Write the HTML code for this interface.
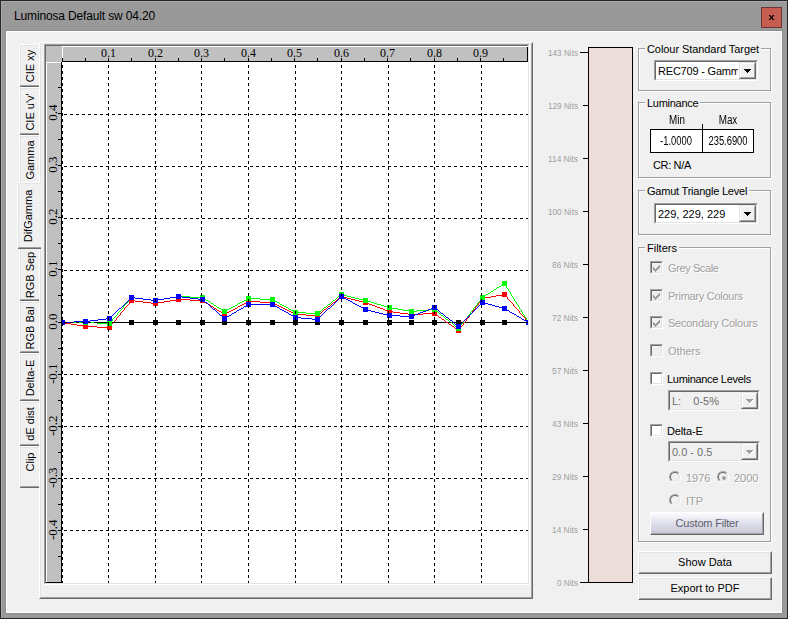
<!DOCTYPE html>
<html lang="en">
<head>
<meta charset="utf-8">
<title>Luminosa Default sw 04.20</title>
<style>
html,body{margin:0;padding:0;}
body{width:788px;height:619px;overflow:hidden;background:#999999;position:relative;font-family:"Liberation Sans",sans-serif;font-size:11px;color:#000;}
.abs,#win *{position:absolute;box-sizing:border-box;}
#win{position:absolute;left:0;top:0;width:788px;height:619px;background:#999999;border:1px solid #26282d;box-sizing:border-box;overflow:hidden;}
#hl{left:0;top:0;width:786px;height:617px;border-left:1px solid #a8a8a8;border-top:1px solid #a8a8a8;}
#title{left:13px;top:7px;letter-spacing:-0.15px;font-size:12px;line-height:16px;white-space:nowrap;color:#000;}
#close{left:760px;top:6px;width:21px;height:21px;background:#c75c50;border:1px solid #6a3832;}
#close span{left:0;top:0;width:19px;height:19px;line-height:18px;text-align:center;font-size:9.5px;font-weight:bold;color:#000;transform:scaleX(1.15);}
#ring{left:4px;top:29px;width:778px;height:584px;background:#8e8e8e;}
#client{left:5px;top:30px;width:776px;height:582px;background:#f0f0f0;border:1px solid #fff;}
#chart{position:absolute;left:-1px;top:-1px;}
.rl{font-family:"Liberation Serif",serif;font-size:12px;fill:#000;}
.nt{font-family:"Liberation Sans",sans-serif;font-size:9.5px;fill:#a0a0a0;}
/* tab pane */
#pane{left:38px;top:41px;width:494px;height:557px;border:1px solid;border-color:#fff #696969 #696969 #fff;}
#pane i{left:0;top:0;right:0;bottom:0;border:1px solid;border-color:#e3e3e3 #a0a0a0 #a0a0a0 #e3e3e3;}
.tab{left:18px;width:20px;background:#f0f0f0;border-left:1px solid #fff;border-top:1px solid #fff;border-bottom:1px solid #696969;border-radius:2px 0 0 2px;}
.tab i{left:0;top:0;right:0;bottom:0;border-left:1px solid #e3e3e3;border-top:1px solid #e3e3e3;border-bottom:1px solid #a0a0a0;border-radius:1px 0 0 1px;}
.tab span{left:9.5px;top:50%;white-space:nowrap;transform:translate(-50%,-50%) rotate(-90deg);font-size:11px;line-height:13px;margin-top:0.5px;}
.tab.sel{left:16px;width:24px;z-index:3;}
.tab.sel span{left:9.5px;}
/* group boxes */
.gb{border:1px solid #a0a0a0;box-shadow:1px 1px 0 #fff, inset 1px 1px 0 #fff;}
.gl{background:#f0f0f0;padding:0 2px;line-height:13px;white-space:nowrap;}
.sunk{background:#fff;border:1px solid;border-color:#a0a0a0 #fff #fff #a0a0a0;}
.sunk>b{left:0;top:0;right:0;bottom:0;border:1px solid;border-color:#696969 #e3e3e3 #e3e3e3 #696969;font-weight:normal;}
.sunk.dis{background:#f0f0f0;}
.ctext{left:3px;top:3px;line-height:13px;white-space:nowrap;overflow:hidden;}
.dd{width:17px;height:17px;right:1px;top:1px;background:#f0f0f0;border:1px solid;border-color:#e3e3e3 #696969 #696969 #e3e3e3;}
.dd>u{left:0;top:0;right:0;bottom:0;border:1px solid;border-color:#fff #a0a0a0 #a0a0a0 #fff;}
.dd>.tri{left:4px;top:6px;fill:#000;}
.dis .dd>.tri{fill:#a0a0a0;filter:drop-shadow(1px 1px 0 #fff);overflow:visible;}
.cb{width:13px;height:13px;}
.lab{line-height:13px;white-space:nowrap;}
.dlab{color:#a0a0a0;text-shadow:1px 1px 0 #fff;}
.rad{width:12px;height:12px;border-radius:50%;background:#f0f0f0;border:1px solid;border-color:#a0a0a0 #fff #fff #a0a0a0;}
.rad>b{left:0;top:0;right:0;bottom:0;border-radius:50%;border:1px solid;border-color:#696969 #e3e3e3 #e3e3e3 #696969;}
.rad>u{left:4px;top:4px;width:4px;height:4px;border-radius:50%;background:#a0a0a0;}
.btn{background:#f0f0f0;border:1px solid;border-color:#fff #696969 #696969 #fff;text-align:center;}
.btn>b{left:0;top:0;right:0;bottom:0;border:1px solid;border-color:#e3e3e3 #a0a0a0 #a0a0a0 #e3e3e3;font-weight:normal;}
.btn>span{left:0;right:0;top:4px;line-height:13px;text-align:center;}
.nar{font-size:12px;line-height:14px;white-space:nowrap;transform-origin:50% 50%;}
</style>
</head>
<body>
<div id="win">
  <div id="hl"></div>
  <div id="title">Luminosa Default sw 04.20</div>
  <div id="close"><span>x</span></div>
  <div id="ring"></div>
  <div id="client"></div>

  <!-- tab control -->
  <div class="tab" style="top:43px;height:43px;"><i></i><span>CIE xy</span></div>
  <div class="tab" style="top:86px;height:48px;"><i></i><span>CIE u'v'</span></div>
  <div class="tab" style="top:134px;height:49px;"><i></i><span>Gamma</span></div>
  <div class="tab" style="top:246px;height:54px;"><i></i><span>RGB Sep</span></div>
  <div class="tab" style="top:300px;height:52px;"><i></i><span>RGB Bal</span></div>
  <div class="tab" style="top:352px;height:48px;"><i></i><span>Delta-E</span></div>
  <div class="tab" style="top:400px;height:45px;"><i></i><span>dE dist</span></div>
  <div class="tab" style="top:445px;height:42px;"><i></i><span style="margin-top:-5px;">Clip</span></div>
  <div id="pane"><i></i></div>
  <div class="tab sel" style="top:181px;height:67px;"><i></i><span>DifGamma</span></div>

  <svg id="chart" width="788" height="619" viewBox="0 0 788 619" shape-rendering="crispEdges">
<rect x="44" y="44" width="486" height="541" fill="#ffffff"/>
<rect x="45" y="45" width="484" height="539" fill="#e3e3e3"/>
<rect x="44" y="44" width="485" height="1" fill="#a0a0a0"/>
<rect x="44" y="44" width="1" height="540" fill="#a0a0a0"/>
<rect x="45" y="45" width="483" height="1" fill="#696969"/>
<rect x="45" y="45" width="1" height="538" fill="#696969"/>
<rect x="46" y="46" width="482" height="537" fill="#ffffff"/>
<rect x="46" y="46" width="16" height="16" fill="#c0c0c0"/>
<rect x="62" y="46" width="466" height="16" fill="#ffffff"/>
<rect x="63" y="47" width="465" height="15" fill="#c0c0c0"/>
<rect x="46" y="62" width="16" height="521" fill="#ffffff"/>
<rect x="47" y="63" width="15" height="520" fill="#c0c0c0"/>
<rect x="62" y="61" width="466" height="1" fill="#000000"/>
<rect x="61" y="62" width="1" height="521" fill="#000000"/>
<rect x="527" y="47" width="1" height="15" fill="#000000"/>
<rect x="46" y="582" width="16" height="1" fill="#000000"/>
<rect x="62" y="58" width="1" height="3" fill="#000"/>
<rect x="85" y="58" width="1" height="3" fill="#000"/>
<rect x="108" y="58" width="1" height="3" fill="#000"/>
<rect x="131" y="58" width="1" height="3" fill="#000"/>
<rect x="155" y="58" width="1" height="3" fill="#000"/>
<rect x="178" y="58" width="1" height="3" fill="#000"/>
<rect x="201" y="58" width="1" height="3" fill="#000"/>
<rect x="224" y="58" width="1" height="3" fill="#000"/>
<rect x="248" y="58" width="1" height="3" fill="#000"/>
<rect x="271" y="58" width="1" height="3" fill="#000"/>
<rect x="294" y="58" width="1" height="3" fill="#000"/>
<rect x="317" y="58" width="1" height="3" fill="#000"/>
<rect x="341" y="58" width="1" height="3" fill="#000"/>
<rect x="364" y="58" width="1" height="3" fill="#000"/>
<rect x="387" y="58" width="1" height="3" fill="#000"/>
<rect x="410" y="58" width="1" height="3" fill="#000"/>
<rect x="434" y="58" width="1" height="3" fill="#000"/>
<rect x="457" y="58" width="1" height="3" fill="#000"/>
<rect x="480" y="58" width="1" height="3" fill="#000"/>
<rect x="503" y="58" width="1" height="3" fill="#000"/>
<rect x="527" y="58" width="1" height="3" fill="#000"/>
<rect x="58" y="87" width="3" height="1" fill="#000"/>
<rect x="58" y="113" width="3" height="1" fill="#000"/>
<rect x="58" y="139" width="3" height="1" fill="#000"/>
<rect x="58" y="165" width="3" height="1" fill="#000"/>
<rect x="58" y="191" width="3" height="1" fill="#000"/>
<rect x="58" y="217" width="3" height="1" fill="#000"/>
<rect x="58" y="243" width="3" height="1" fill="#000"/>
<rect x="58" y="269" width="3" height="1" fill="#000"/>
<rect x="58" y="295" width="3" height="1" fill="#000"/>
<rect x="58" y="322" width="3" height="1" fill="#000"/>
<rect x="58" y="348" width="3" height="1" fill="#000"/>
<rect x="58" y="374" width="3" height="1" fill="#000"/>
<rect x="58" y="400" width="3" height="1" fill="#000"/>
<rect x="58" y="426" width="3" height="1" fill="#000"/>
<rect x="58" y="452" width="3" height="1" fill="#000"/>
<rect x="58" y="478" width="3" height="1" fill="#000"/>
<rect x="58" y="504" width="3" height="1" fill="#000"/>
<rect x="58" y="530" width="3" height="1" fill="#000"/>
<rect x="58" y="556" width="3" height="1" fill="#000"/>
<rect x="58" y="582" width="3" height="1" fill="#000"/>
<text x="108.5" y="57" text-anchor="middle" class="rl">0.1</text>
<text x="155.5" y="57" text-anchor="middle" class="rl">0.2</text>
<text x="201.5" y="57" text-anchor="middle" class="rl">0.3</text>
<text x="248.5" y="57" text-anchor="middle" class="rl">0.4</text>
<text x="294.5" y="57" text-anchor="middle" class="rl">0.5</text>
<text x="341.5" y="57" text-anchor="middle" class="rl">0.6</text>
<text x="387.5" y="57" text-anchor="middle" class="rl">0.7</text>
<text x="434.5" y="57" text-anchor="middle" class="rl">0.8</text>
<text x="480.5" y="57" text-anchor="middle" class="rl">0.9</text>
<text transform="translate(57.1,112.7) rotate(-90)" text-anchor="middle" class="rl" style="font-size:13px">0.4</text>
<text transform="translate(57.1,164.7) rotate(-90)" text-anchor="middle" class="rl" style="font-size:13px">0.3</text>
<text transform="translate(57.1,216.7) rotate(-90)" text-anchor="middle" class="rl" style="font-size:13px">0.2</text>
<text transform="translate(57.1,268.7) rotate(-90)" text-anchor="middle" class="rl" style="font-size:13px">0.1</text>
<text transform="translate(57.1,321.7) rotate(-90)" text-anchor="middle" class="rl" style="font-size:13px">0.0</text>
<text transform="translate(57.1,373.7) rotate(-90)" text-anchor="middle" class="rl" style="font-size:13px">-0.1</text>
<text transform="translate(57.1,425.7) rotate(-90)" text-anchor="middle" class="rl" style="font-size:13px">-0.2</text>
<text transform="translate(57.1,477.7) rotate(-90)" text-anchor="middle" class="rl" style="font-size:13px">-0.3</text>
<text transform="translate(57.1,529.7) rotate(-90)" text-anchor="middle" class="rl" style="font-size:13px">-0.4</text>
<g clip-path="url(#pc)">
<path fill="#000000" d="M62 322h467v1h-467z"/>
<rect x="60" y="320" width="5" height="5" fill="#000000"/>
<rect x="83" y="320" width="5" height="5" fill="#000000"/>
<rect x="107" y="320" width="5" height="5" fill="#000000"/>
<rect x="129" y="320" width="5" height="5" fill="#000000"/>
<rect x="153" y="320" width="5" height="5" fill="#000000"/>
<rect x="176" y="320" width="5" height="5" fill="#000000"/>
<rect x="200" y="320" width="5" height="5" fill="#000000"/>
<rect x="222" y="320" width="5" height="5" fill="#000000"/>
<rect x="246" y="320" width="5" height="5" fill="#000000"/>
<rect x="270" y="320" width="5" height="5" fill="#000000"/>
<rect x="293" y="320" width="5" height="5" fill="#000000"/>
<rect x="315" y="320" width="5" height="5" fill="#000000"/>
<rect x="339" y="320" width="5" height="5" fill="#000000"/>
<rect x="363" y="320" width="5" height="5" fill="#000000"/>
<rect x="387" y="320" width="5" height="5" fill="#000000"/>
<rect x="409" y="320" width="5" height="5" fill="#000000"/>
<rect x="432" y="320" width="5" height="5" fill="#000000"/>
<rect x="456" y="320" width="5" height="5" fill="#000000"/>
<rect x="480" y="320" width="5" height="5" fill="#000000"/>
<rect x="502" y="320" width="5" height="5" fill="#000000"/>
<rect x="526" y="320" width="5" height="5" fill="#000000"/>
<path fill="#ff0000" d="M502 294h3v1h-3zM496 295h6v1h-6zM505 295h1v1h-1zM341 296h2v1h-2zM491 296h5v1h-5zM506 296h1v1h-1zM340 297h1v1h-1zM343 297h4v1h-4zM485 297h6v1h-6zM507 297h1v1h-1zM338 298h2v1h-2zM347 298h4v1h-4zM482 298h3v1h-3zM507 298h1v1h-1zM176 299h14v1h-14zM337 299h1v1h-1zM351 299h4v1h-4zM481 299h1v1h-1zM508 299h1v1h-1zM131 300h4v1h-4zM170 300h6v1h-6zM190 300h13v1h-13zM336 300h1v1h-1zM355 300h4v1h-4zM481 300h1v1h-1zM509 300h1v1h-1zM130 301h1v1h-1zM135 301h8v1h-8zM164 301h6v1h-6zM203 301h2v1h-2zM248 301h12v1h-12zM335 301h1v1h-1zM359 301h4v1h-4zM480 301h1v1h-1zM510 301h1v1h-1zM129 302h1v1h-1zM143 302h8v1h-8zM158 302h6v1h-6zM205 302h1v1h-1zM246 302h2v1h-2zM260 302h13v1h-13zM333 302h2v1h-2zM363 302h4v1h-4zM479 302h1v1h-1zM511 302h1v1h-1zM129 303h1v1h-1zM151 303h7v1h-7zM206 303h2v1h-2zM244 303h2v1h-2zM273 303h2v1h-2zM332 303h1v1h-1zM367 303h2v1h-2zM478 303h1v1h-1zM512 303h1v1h-1zM128 304h1v1h-1zM208 304h2v1h-2zM242 304h2v1h-2zM275 304h2v1h-2zM331 304h1v1h-1zM369 304h3v1h-3zM478 304h1v1h-1zM513 304h1v1h-1zM127 305h1v1h-1zM210 305h1v1h-1zM240 305h2v1h-2zM277 305h2v1h-2zM330 305h1v1h-1zM372 305h3v1h-3zM477 305h1v1h-1zM513 305h1v1h-1zM126 306h1v1h-1zM211 306h2v1h-2zM238 306h2v1h-2zM279 306h2v1h-2zM328 306h2v1h-2zM375 306h2v1h-2zM476 306h1v1h-1zM514 306h1v1h-1zM125 307h1v1h-1zM213 307h1v1h-1zM237 307h1v1h-1zM281 307h2v1h-2zM327 307h1v1h-1zM377 307h3v1h-3zM475 307h1v1h-1zM515 307h1v1h-1zM124 308h1v1h-1zM214 308h2v1h-2zM235 308h2v1h-2zM283 308h2v1h-2zM326 308h1v1h-1zM380 308h3v1h-3zM475 308h1v1h-1zM516 308h1v1h-1zM124 309h1v1h-1zM216 309h1v1h-1zM233 309h2v1h-2zM285 309h2v1h-2zM324 309h2v1h-2zM383 309h2v1h-2zM474 309h1v1h-1zM517 309h1v1h-1zM123 310h1v1h-1zM217 310h2v1h-2zM231 310h2v1h-2zM287 310h2v1h-2zM323 310h1v1h-1zM385 310h3v1h-3zM473 310h1v1h-1zM518 310h1v1h-1zM122 311h1v1h-1zM219 311h2v1h-2zM229 311h2v1h-2zM289 311h2v1h-2zM322 311h1v1h-1zM388 311h5v1h-5zM472 311h1v1h-1zM519 311h1v1h-1zM121 312h1v1h-1zM221 312h1v1h-1zM227 312h2v1h-2zM291 312h2v1h-2zM321 312h1v1h-1zM393 312h7v1h-7zM472 312h1v1h-1zM519 312h1v1h-1zM120 313h1v1h-1zM222 313h2v1h-2zM225 313h2v1h-2zM293 313h2v1h-2zM319 313h2v1h-2zM400 313h8v1h-8zM423 313h12v1h-12zM471 313h1v1h-1zM520 313h1v1h-1zM120 314h1v1h-1zM224 314h1v1h-1zM295 314h11v1h-11zM318 314h1v1h-1zM408 314h15v1h-15zM435 314h2v1h-2zM470 314h1v1h-1zM521 314h1v1h-1zM119 315h1v1h-1zM306 315h12v1h-12zM437 315h1v1h-1zM469 315h1v1h-1zM522 315h1v1h-1zM118 316h1v1h-1zM438 316h1v1h-1zM469 316h1v1h-1zM523 316h1v1h-1zM117 317h1v1h-1zM439 317h2v1h-2zM468 317h1v1h-1zM524 317h1v1h-1zM116 318h1v1h-1zM441 318h1v1h-1zM467 318h1v1h-1zM525 318h1v1h-1zM116 319h1v1h-1zM442 319h2v1h-2zM466 319h1v1h-1zM525 319h1v1h-1zM115 320h1v1h-1zM444 320h1v1h-1zM466 320h1v1h-1zM526 320h1v1h-1zM114 321h1v1h-1zM445 321h1v1h-1zM465 321h1v1h-1zM527 321h1v1h-1zM62 322h3v1h-3zM113 322h1v1h-1zM446 322h2v1h-2zM464 322h1v1h-1zM528 322h1v1h-1zM65 323h6v1h-6zM112 323h1v1h-1zM448 323h1v1h-1zM463 323h1v1h-1zM71 324h6v1h-6zM111 324h1v1h-1zM449 324h2v1h-2zM463 324h1v1h-1zM77 325h6v1h-6zM111 325h1v1h-1zM451 325h1v1h-1zM462 325h1v1h-1zM83 326h14v1h-14zM110 326h1v1h-1zM452 326h2v1h-2zM461 326h1v1h-1zM97 327h13v1h-13zM454 327h1v1h-1zM460 327h1v1h-1zM455 328h1v1h-1zM460 328h1v1h-1zM456 329h2v1h-2zM459 329h1v1h-1zM458 330h1v1h-1z"/>
<rect x="60" y="320" width="5" height="5" fill="#ff0000"/>
<rect x="83" y="324" width="5" height="5" fill="#ff0000"/>
<rect x="107" y="325" width="5" height="5" fill="#ff0000"/>
<rect x="129" y="298" width="5" height="5" fill="#ff0000"/>
<rect x="153" y="301" width="5" height="5" fill="#ff0000"/>
<rect x="176" y="297" width="5" height="5" fill="#ff0000"/>
<rect x="200" y="298" width="5" height="5" fill="#ff0000"/>
<rect x="222" y="312" width="5" height="5" fill="#ff0000"/>
<rect x="246" y="299" width="5" height="5" fill="#ff0000"/>
<rect x="270" y="300" width="5" height="5" fill="#ff0000"/>
<rect x="293" y="312" width="5" height="5" fill="#ff0000"/>
<rect x="315" y="313" width="5" height="5" fill="#ff0000"/>
<rect x="339" y="294" width="5" height="5" fill="#ff0000"/>
<rect x="363" y="300" width="5" height="5" fill="#ff0000"/>
<rect x="387" y="309" width="5" height="5" fill="#ff0000"/>
<rect x="409" y="312" width="5" height="5" fill="#ff0000"/>
<rect x="432" y="311" width="5" height="5" fill="#ff0000"/>
<rect x="456" y="328" width="5" height="5" fill="#ff0000"/>
<rect x="480" y="296" width="5" height="5" fill="#ff0000"/>
<rect x="502" y="292" width="5" height="5" fill="#ff0000"/>
<rect x="526" y="320" width="5" height="5" fill="#ff0000"/>
<path fill="#00ff00" d="M504 283h1v1h-1zM502 284h2v1h-2zM505 284h1v1h-1zM501 285h1v1h-1zM505 285h1v1h-1zM499 286h2v1h-2zM506 286h1v1h-1zM497 287h2v1h-2zM506 287h1v1h-1zM496 288h1v1h-1zM507 288h1v1h-1zM494 289h2v1h-2zM508 289h1v1h-1zM493 290h1v1h-1zM508 290h1v1h-1zM491 291h2v1h-2zM509 291h1v1h-1zM490 292h1v1h-1zM510 292h1v1h-1zM488 293h2v1h-2zM510 293h1v1h-1zM341 294h2v1h-2zM486 294h2v1h-2zM511 294h1v1h-1zM340 295h1v1h-1zM343 295h4v1h-4zM485 295h1v1h-1zM511 295h1v1h-1zM176 296h14v1h-14zM338 296h2v1h-2zM347 296h4v1h-4zM483 296h2v1h-2zM512 296h1v1h-1zM131 297h4v1h-4zM170 297h6v1h-6zM190 297h13v1h-13zM337 297h1v1h-1zM351 297h4v1h-4zM482 297h1v1h-1zM513 297h1v1h-1zM130 298h1v1h-1zM135 298h8v1h-8zM164 298h6v1h-6zM203 298h2v1h-2zM248 298h12v1h-12zM336 298h1v1h-1zM355 298h4v1h-4zM481 298h1v1h-1zM513 298h1v1h-1zM129 299h1v1h-1zM143 299h8v1h-8zM158 299h6v1h-6zM205 299h1v1h-1zM246 299h2v1h-2zM260 299h13v1h-13zM335 299h1v1h-1zM359 299h4v1h-4zM480 299h1v1h-1zM514 299h1v1h-1zM128 300h1v1h-1zM151 300h7v1h-7zM206 300h2v1h-2zM244 300h2v1h-2zM273 300h2v1h-2zM333 300h2v1h-2zM363 300h4v1h-4zM480 300h1v1h-1zM514 300h1v1h-1zM128 301h1v1h-1zM208 301h2v1h-2zM242 301h2v1h-2zM275 301h2v1h-2zM332 301h1v1h-1zM367 301h4v1h-4zM479 301h1v1h-1zM515 301h1v1h-1zM127 302h1v1h-1zM210 302h1v1h-1zM240 302h2v1h-2zM277 302h2v1h-2zM331 302h1v1h-1zM371 302h3v1h-3zM478 302h1v1h-1zM516 302h1v1h-1zM126 303h1v1h-1zM211 303h2v1h-2zM238 303h2v1h-2zM279 303h1v1h-1zM330 303h1v1h-1zM374 303h3v1h-3zM477 303h1v1h-1zM516 303h1v1h-1zM125 304h1v1h-1zM213 304h1v1h-1zM237 304h1v1h-1zM280 304h2v1h-2zM328 304h2v1h-2zM377 304h4v1h-4zM477 304h1v1h-1zM517 304h1v1h-1zM124 305h1v1h-1zM214 305h2v1h-2zM235 305h2v1h-2zM282 305h2v1h-2zM327 305h1v1h-1zM381 305h3v1h-3zM476 305h1v1h-1zM518 305h1v1h-1zM123 306h1v1h-1zM216 306h1v1h-1zM233 306h2v1h-2zM284 306h2v1h-2zM326 306h1v1h-1zM384 306h4v1h-4zM475 306h1v1h-1zM518 306h1v1h-1zM123 307h1v1h-1zM217 307h2v1h-2zM231 307h2v1h-2zM286 307h2v1h-2zM324 307h2v1h-2zM388 307h4v1h-4zM474 307h1v1h-1zM519 307h1v1h-1zM122 308h1v1h-1zM219 308h2v1h-2zM229 308h2v1h-2zM288 308h1v1h-1zM323 308h1v1h-1zM392 308h6v1h-6zM473 308h1v1h-1zM519 308h1v1h-1zM121 309h1v1h-1zM221 309h1v1h-1zM227 309h2v1h-2zM289 309h2v1h-2zM322 309h1v1h-1zM398 309h5v1h-5zM429 309h6v1h-6zM473 309h1v1h-1zM520 309h1v1h-1zM120 310h1v1h-1zM222 310h2v1h-2zM225 310h2v1h-2zM291 310h2v1h-2zM321 310h1v1h-1zM403 310h6v1h-6zM417 310h12v1h-12zM435 310h1v1h-1zM472 310h1v1h-1zM521 310h1v1h-1zM119 311h1v1h-1zM224 311h1v1h-1zM293 311h2v1h-2zM319 311h2v1h-2zM409 311h8v1h-8zM436 311h2v1h-2zM471 311h1v1h-1zM521 311h1v1h-1zM118 312h1v1h-1zM295 312h11v1h-11zM318 312h1v1h-1zM438 312h1v1h-1zM470 312h1v1h-1zM522 312h1v1h-1zM117 313h1v1h-1zM306 313h12v1h-12zM439 313h1v1h-1zM470 313h1v1h-1zM522 313h1v1h-1zM117 314h1v1h-1zM440 314h1v1h-1zM469 314h1v1h-1zM523 314h1v1h-1zM116 315h1v1h-1zM441 315h2v1h-2zM468 315h1v1h-1zM524 315h1v1h-1zM115 316h1v1h-1zM443 316h1v1h-1zM467 316h1v1h-1zM524 316h1v1h-1zM114 317h1v1h-1zM444 317h1v1h-1zM467 317h1v1h-1zM525 317h1v1h-1zM113 318h1v1h-1zM445 318h1v1h-1zM466 318h1v1h-1zM526 318h1v1h-1zM112 319h1v1h-1zM446 319h2v1h-2zM465 319h1v1h-1zM526 319h1v1h-1zM112 320h1v1h-1zM448 320h1v1h-1zM464 320h1v1h-1zM527 320h1v1h-1zM111 321h1v1h-1zM449 321h1v1h-1zM463 321h1v1h-1zM527 321h1v1h-1zM62 322h35v1h-35zM110 322h1v1h-1zM450 322h2v1h-2zM463 322h1v1h-1zM528 322h1v1h-1zM97 323h13v1h-13zM452 323h1v1h-1zM462 323h1v1h-1zM453 324h1v1h-1zM461 324h1v1h-1zM454 325h1v1h-1zM460 325h1v1h-1zM455 326h2v1h-2zM460 326h1v1h-1zM457 327h1v1h-1zM459 327h1v1h-1zM458 328h1v1h-1z"/>
<rect x="60" y="320" width="5" height="5" fill="#00ff00"/>
<rect x="83" y="320" width="5" height="5" fill="#00ff00"/>
<rect x="107" y="321" width="5" height="5" fill="#00ff00"/>
<rect x="129" y="295" width="5" height="5" fill="#00ff00"/>
<rect x="153" y="298" width="5" height="5" fill="#00ff00"/>
<rect x="176" y="294" width="5" height="5" fill="#00ff00"/>
<rect x="200" y="295" width="5" height="5" fill="#00ff00"/>
<rect x="222" y="309" width="5" height="5" fill="#00ff00"/>
<rect x="246" y="296" width="5" height="5" fill="#00ff00"/>
<rect x="270" y="297" width="5" height="5" fill="#00ff00"/>
<rect x="293" y="310" width="5" height="5" fill="#00ff00"/>
<rect x="315" y="311" width="5" height="5" fill="#00ff00"/>
<rect x="339" y="292" width="5" height="5" fill="#00ff00"/>
<rect x="363" y="298" width="5" height="5" fill="#00ff00"/>
<rect x="387" y="305" width="5" height="5" fill="#00ff00"/>
<rect x="409" y="309" width="5" height="5" fill="#00ff00"/>
<rect x="432" y="307" width="5" height="5" fill="#00ff00"/>
<rect x="456" y="326" width="5" height="5" fill="#00ff00"/>
<rect x="480" y="295" width="5" height="5" fill="#00ff00"/>
<rect x="502" y="281" width="5" height="5" fill="#00ff00"/>
<rect x="526" y="320" width="5" height="5" fill="#00ff00"/>
<path fill="#0000ff" d="M176 296h6v1h-6zM341 296h1v1h-1zM131 297h4v1h-4zM170 297h6v1h-6zM182 297h8v1h-8zM340 297h1v1h-1zM342 297h2v1h-2zM130 298h1v1h-1zM135 298h8v1h-8zM164 298h6v1h-6zM190 298h8v1h-8zM339 298h1v1h-1zM344 298h2v1h-2zM129 299h1v1h-1zM143 299h8v1h-8zM158 299h6v1h-6zM198 299h5v1h-5zM338 299h1v1h-1zM346 299h2v1h-2zM128 300h1v1h-1zM151 300h7v1h-7zM203 300h1v1h-1zM337 300h1v1h-1zM348 300h2v1h-2zM127 301h1v1h-1zM204 301h1v1h-1zM336 301h1v1h-1zM350 301h2v1h-2zM126 302h1v1h-1zM205 302h2v1h-2zM335 302h1v1h-1zM352 302h1v1h-1zM482 302h2v1h-2zM125 303h1v1h-1zM207 303h1v1h-1zM334 303h1v1h-1zM353 303h2v1h-2zM481 303h1v1h-1zM484 303h4v1h-4zM124 304h1v1h-1zM208 304h1v1h-1zM248 304h25v1h-25zM333 304h1v1h-1zM355 304h2v1h-2zM480 304h1v1h-1zM488 304h4v1h-4zM123 305h1v1h-1zM209 305h1v1h-1zM246 305h2v1h-2zM273 305h2v1h-2zM332 305h1v1h-1zM357 305h2v1h-2zM479 305h1v1h-1zM492 305h3v1h-3zM122 306h1v1h-1zM210 306h1v1h-1zM244 306h2v1h-2zM275 306h2v1h-2zM331 306h1v1h-1zM359 306h2v1h-2zM478 306h1v1h-1zM495 306h4v1h-4zM121 307h1v1h-1zM211 307h1v1h-1zM243 307h1v1h-1zM277 307h2v1h-2zM330 307h1v1h-1zM361 307h2v1h-2zM433 307h2v1h-2zM477 307h1v1h-1zM499 307h4v1h-4zM119 308h2v1h-2zM212 308h1v1h-1zM241 308h2v1h-2zM279 308h1v1h-1zM328 308h2v1h-2zM363 308h2v1h-2zM431 308h2v1h-2zM435 308h1v1h-1zM476 308h1v1h-1zM503 308h2v1h-2zM118 309h1v1h-1zM213 309h2v1h-2zM239 309h2v1h-2zM280 309h2v1h-2zM327 309h1v1h-1zM365 309h2v1h-2zM428 309h3v1h-3zM436 309h2v1h-2zM475 309h1v1h-1zM505 309h2v1h-2zM117 310h1v1h-1zM215 310h1v1h-1zM237 310h2v1h-2zM282 310h2v1h-2zM326 310h1v1h-1zM367 310h4v1h-4zM426 310h2v1h-2zM438 310h1v1h-1zM474 310h1v1h-1zM507 310h2v1h-2zM116 311h1v1h-1zM216 311h1v1h-1zM236 311h1v1h-1zM284 311h2v1h-2zM325 311h1v1h-1zM371 311h4v1h-4zM423 311h3v1h-3zM439 311h1v1h-1zM473 311h1v1h-1zM509 311h1v1h-1zM115 312h1v1h-1zM217 312h1v1h-1zM234 312h2v1h-2zM286 312h2v1h-2zM324 312h1v1h-1zM375 312h4v1h-4zM420 312h3v1h-3zM440 312h1v1h-1zM472 312h1v1h-1zM510 312h2v1h-2zM114 313h1v1h-1zM218 313h1v1h-1zM232 313h2v1h-2zM288 313h1v1h-1zM323 313h1v1h-1zM379 313h4v1h-4zM418 313h2v1h-2zM441 313h2v1h-2zM471 313h1v1h-1zM512 313h2v1h-2zM113 314h1v1h-1zM219 314h1v1h-1zM231 314h1v1h-1zM289 314h2v1h-2zM322 314h1v1h-1zM383 314h4v1h-4zM415 314h3v1h-3zM443 314h1v1h-1zM470 314h1v1h-1zM514 314h2v1h-2zM112 315h1v1h-1zM220 315h2v1h-2zM229 315h2v1h-2zM291 315h2v1h-2zM321 315h1v1h-1zM387 315h13v1h-13zM413 315h2v1h-2zM444 315h1v1h-1zM469 315h1v1h-1zM516 315h1v1h-1zM111 316h1v1h-1zM222 316h1v1h-1zM227 316h2v1h-2zM293 316h2v1h-2zM320 316h1v1h-1zM400 316h13v1h-13zM445 316h1v1h-1zM468 316h1v1h-1zM517 316h2v1h-2zM110 317h1v1h-1zM223 317h1v1h-1zM225 317h2v1h-2zM295 317h6v1h-6zM319 317h1v1h-1zM446 317h2v1h-2zM467 317h1v1h-1zM519 317h2v1h-2zM106 318h4v1h-4zM224 318h1v1h-1zM301 318h11v1h-11zM318 318h1v1h-1zM448 318h1v1h-1zM466 318h1v1h-1zM521 318h1v1h-1zM98 319h8v1h-8zM312 319h6v1h-6zM449 319h1v1h-1zM465 319h1v1h-1zM522 319h2v1h-2zM90 320h8v1h-8zM450 320h2v1h-2zM464 320h1v1h-1zM524 320h2v1h-2zM74 321h16v1h-16zM452 321h1v1h-1zM463 321h1v1h-1zM526 321h2v1h-2zM62 322h12v1h-12zM453 322h1v1h-1zM462 322h1v1h-1zM528 322h1v1h-1zM454 323h1v1h-1zM461 323h1v1h-1zM455 324h2v1h-2zM460 324h1v1h-1zM457 325h1v1h-1zM459 325h1v1h-1zM458 326h1v1h-1z"/>
<rect x="60" y="320" width="5" height="5" fill="#0000ff"/>
<rect x="83" y="319" width="5" height="5" fill="#0000ff"/>
<rect x="107" y="316" width="5" height="5" fill="#0000ff"/>
<rect x="129" y="295" width="5" height="5" fill="#0000ff"/>
<rect x="153" y="298" width="5" height="5" fill="#0000ff"/>
<rect x="176" y="294" width="5" height="5" fill="#0000ff"/>
<rect x="200" y="297" width="5" height="5" fill="#0000ff"/>
<rect x="222" y="316" width="5" height="5" fill="#0000ff"/>
<rect x="246" y="302" width="5" height="5" fill="#0000ff"/>
<rect x="270" y="302" width="5" height="5" fill="#0000ff"/>
<rect x="293" y="315" width="5" height="5" fill="#0000ff"/>
<rect x="315" y="317" width="5" height="5" fill="#0000ff"/>
<rect x="339" y="294" width="5" height="5" fill="#0000ff"/>
<rect x="363" y="307" width="5" height="5" fill="#0000ff"/>
<rect x="387" y="313" width="5" height="5" fill="#0000ff"/>
<rect x="409" y="314" width="5" height="5" fill="#0000ff"/>
<rect x="432" y="305" width="5" height="5" fill="#0000ff"/>
<rect x="456" y="324" width="5" height="5" fill="#0000ff"/>
<rect x="480" y="300" width="5" height="5" fill="#0000ff"/>
<rect x="502" y="306" width="5" height="5" fill="#0000ff"/>
<rect x="526" y="320" width="5" height="5" fill="#0000ff"/>
</g>
<defs><clipPath id="pc"><rect x="62" y="62" width="466" height="521"/></clipPath></defs>
<line x1="62.5" y1="62" x2="62.5" y2="583" stroke="#000" stroke-width="1" stroke-dasharray="3 3" stroke-dashoffset="3"/>
<line x1="108.5" y1="62" x2="108.5" y2="583" stroke="#000" stroke-width="1" stroke-dasharray="3 3" stroke-dashoffset="3"/>
<line x1="155.5" y1="62" x2="155.5" y2="583" stroke="#000" stroke-width="1" stroke-dasharray="3 3" stroke-dashoffset="3"/>
<line x1="201.5" y1="62" x2="201.5" y2="583" stroke="#000" stroke-width="1" stroke-dasharray="3 3" stroke-dashoffset="3"/>
<line x1="248.5" y1="62" x2="248.5" y2="583" stroke="#000" stroke-width="1" stroke-dasharray="3 3" stroke-dashoffset="3"/>
<line x1="295.5" y1="62" x2="295.5" y2="583" stroke="#000" stroke-width="1" stroke-dasharray="3 3" stroke-dashoffset="3"/>
<line x1="341.5" y1="62" x2="341.5" y2="583" stroke="#000" stroke-width="1" stroke-dasharray="3 3" stroke-dashoffset="3"/>
<line x1="388.5" y1="62" x2="388.5" y2="583" stroke="#000" stroke-width="1" stroke-dasharray="3 3" stroke-dashoffset="3"/>
<line x1="434.5" y1="62" x2="434.5" y2="583" stroke="#000" stroke-width="1" stroke-dasharray="3 3" stroke-dashoffset="3"/>
<line x1="481.5" y1="62" x2="481.5" y2="583" stroke="#000" stroke-width="1" stroke-dasharray="3 3" stroke-dashoffset="3"/>
<line x1="62" y1="114.5" x2="528" y2="114.5" stroke="#000" stroke-width="1" stroke-dasharray="3 3" stroke-dashoffset="4"/>
<line x1="62" y1="166.5" x2="528" y2="166.5" stroke="#000" stroke-width="1" stroke-dasharray="3 3" stroke-dashoffset="4"/>
<line x1="62" y1="218.5" x2="528" y2="218.5" stroke="#000" stroke-width="1" stroke-dasharray="3 3" stroke-dashoffset="4"/>
<line x1="62" y1="270.5" x2="528" y2="270.5" stroke="#000" stroke-width="1" stroke-dasharray="3 3" stroke-dashoffset="4"/>
<line x1="62" y1="322.5" x2="528" y2="322.5" stroke="#000" stroke-width="1" stroke-dasharray="3 3" stroke-dashoffset="4"/>
<line x1="62" y1="374.5" x2="528" y2="374.5" stroke="#000" stroke-width="1" stroke-dasharray="3 3" stroke-dashoffset="4"/>
<line x1="62" y1="426.5" x2="528" y2="426.5" stroke="#000" stroke-width="1" stroke-dasharray="3 3" stroke-dashoffset="4"/>
<line x1="62" y1="478.5" x2="528" y2="478.5" stroke="#000" stroke-width="1" stroke-dasharray="3 3" stroke-dashoffset="4"/>
<line x1="62" y1="530.5" x2="528" y2="530.5" stroke="#000" stroke-width="1" stroke-dasharray="3 3" stroke-dashoffset="4"/>
<rect x="588" y="47" width="45" height="536" fill="#000"/>
<rect x="589" y="48" width="43" height="534" fill="#ecdcda"/>
<rect x="580" y="52" width="8" height="1" fill="#000"/>
<text x="578" y="56" text-anchor="end" class="nt" textLength="30" lengthAdjust="spacingAndGlyphs">143 Nits</text>
<rect x="583" y="105" width="5" height="1" fill="#000"/>
<text x="578" y="109" text-anchor="end" class="nt" textLength="30" lengthAdjust="spacingAndGlyphs">129 Nits</text>
<rect x="583" y="158" width="5" height="1" fill="#000"/>
<text x="578" y="162" text-anchor="end" class="nt" textLength="30" lengthAdjust="spacingAndGlyphs">114 Nits</text>
<rect x="583" y="211" width="5" height="1" fill="#000"/>
<text x="578" y="215" text-anchor="end" class="nt" textLength="30" lengthAdjust="spacingAndGlyphs">100 Nits</text>
<rect x="583" y="264" width="5" height="1" fill="#000"/>
<text x="578" y="268" text-anchor="end" class="nt" textLength="26" lengthAdjust="spacingAndGlyphs">86 Nits</text>
<rect x="583" y="317" width="5" height="1" fill="#000"/>
<text x="578" y="321" text-anchor="end" class="nt" textLength="26" lengthAdjust="spacingAndGlyphs">72 Nits</text>
<rect x="583" y="370" width="5" height="1" fill="#000"/>
<text x="578" y="374" text-anchor="end" class="nt" textLength="26" lengthAdjust="spacingAndGlyphs">57 Nits</text>
<rect x="583" y="423" width="5" height="1" fill="#000"/>
<text x="578" y="427" text-anchor="end" class="nt" textLength="26" lengthAdjust="spacingAndGlyphs">43 Nits</text>
<rect x="583" y="476" width="5" height="1" fill="#000"/>
<text x="578" y="480" text-anchor="end" class="nt" textLength="26" lengthAdjust="spacingAndGlyphs">29 Nits</text>
<rect x="583" y="529" width="5" height="1" fill="#000"/>
<text x="578" y="533" text-anchor="end" class="nt" textLength="26" lengthAdjust="spacingAndGlyphs">14 Nits</text>
<rect x="580" y="582" width="8" height="1" fill="#000"/>
<text x="578" y="586" text-anchor="end" class="nt" textLength="21" lengthAdjust="spacingAndGlyphs">0 Nits</text>
</svg>

  <!-- Colour Standard Target -->
  <div class="gb" style="left:637px;top:47px;width:133px;height:43px;"></div>
  <div class="gl" style="left:644px;top:42px;letter-spacing:-0.07px;">Colour Standard Target</div>
  <div class="sunk" style="left:653px;top:59px;width:104px;height:21px;"><b></b>
    <div class="ctext" style="width:80px;top:4px;letter-spacing:-0.2px;">REC709 - Gamma 2.2</div>
    <div class="dd"><u></u><svg class="tri" width="7" height="4" viewBox="0 0 7 4" shape-rendering="crispEdges"><path d="M0 0h7v1h-1v1h-1v1h-1v1h-1v-1h-1v-1h-1v-1h-1z"/></svg></div>
  </div>

  <!-- Luminance -->
  <div class="gb" style="left:637px;top:101px;width:133px;height:76px;"></div>
  <div class="gl" style="left:644px;top:96px;letter-spacing:-0.28px;">Luminance</div>
  <div class="nar" style="left:656px;top:112px;width:40px;text-align:center;transform:scaleX(.82);">Min</div>
  <div class="nar" style="left:707px;top:112px;width:40px;text-align:center;transform:scaleX(.82);">Max</div>
  <div style="left:701px;top:123px;width:1px;height:6px;background:#000;"></div>
  <div style="left:649px;top:128px;width:104px;height:24px;background:#fff;border:1px solid #000;"></div>
  <div style="left:701px;top:128px;width:1px;height:24px;background:#000;"></div>
  <div class="nar" style="left:645px;top:133px;width:60px;text-align:center;transform:scaleX(.78);">-1.0000</div>
  <div class="nar" style="left:697px;top:133px;width:60px;text-align:center;transform:scaleX(.78);">235.6900</div>
  <div class="lab" style="left:652px;top:158px;letter-spacing:-0.35px;">CR: N/A</div>

  <!-- Gamut Triangle Level -->
  <div class="gb" style="left:637px;top:189px;width:133px;height:45px;"></div>
  <div class="gl" style="left:644px;top:184px;letter-spacing:-0.22px;">Gamut Triangle Level</div>
  <div class="sunk" style="left:653px;top:202px;width:104px;height:21px;"><b></b>
    <div class="ctext" style="width:80px;top:4px;">229, 229, 229</div>
    <div class="dd"><u></u><svg class="tri" width="7" height="4" viewBox="0 0 7 4" shape-rendering="crispEdges"><path d="M0 0h7v1h-1v1h-1v1h-1v1h-1v-1h-1v-1h-1v-1h-1z"/></svg></div>
  </div>

  <!-- Filters -->
  <div class="gb" style="left:637px;top:246px;width:133px;height:295px;"></div>
  <div class="gl" style="left:644px;top:241px;">Filters</div>

  <div class="cb sunk dis" style="left:649px;top:260px;"><b></b><svg style="left:2px;top:3px;" width="7" height="7" viewBox="0 0 7 7" shape-rendering="crispEdges"><path d="M0 2h1v1h1v1h1v-1h1v-1h1v-1h1v-1h1v3h-1v1h-1v1h-1v1h-1v1h-1v-1h-1v-1h-1z" fill="#a0a0a0"/></svg></div>
  <div class="lab dlab" style="left:667px;top:261px;letter-spacing:-0.40px;">Grey Scale</div>
  <div class="cb sunk dis" style="left:649px;top:288px;"><b></b><svg style="left:2px;top:3px;" width="7" height="7" viewBox="0 0 7 7" shape-rendering="crispEdges"><path d="M0 2h1v1h1v1h1v-1h1v-1h1v-1h1v-1h1v3h-1v1h-1v1h-1v1h-1v1h-1v-1h-1v-1h-1z" fill="#a0a0a0"/></svg></div>
  <div class="lab dlab" style="left:667px;top:289px;letter-spacing:-0.27px;">Primary Colours</div>
  <div class="cb sunk dis" style="left:649px;top:315px;"><b></b><svg style="left:2px;top:3px;" width="7" height="7" viewBox="0 0 7 7" shape-rendering="crispEdges"><path d="M0 2h1v1h1v1h1v-1h1v-1h1v-1h1v-1h1v3h-1v1h-1v1h-1v1h-1v1h-1v-1h-1v-1h-1z" fill="#a0a0a0"/></svg></div>
  <div class="lab dlab" style="left:667px;top:316px;letter-spacing:-0.24px;">Secondary Colours</div>
  <div class="cb sunk dis" style="left:649px;top:343px;"><b></b></div>
  <div class="lab dlab" style="left:667px;top:344px;letter-spacing:-0.10px;">Others</div>

  <div class="cb sunk" style="left:649px;top:371px;"><b></b></div>
  <div class="lab" style="left:666px;top:372px;letter-spacing:-0.30px;">Luminance Levels</div>
  <div class="sunk dis" style="left:667px;top:389px;width:92px;height:21px;"><b></b>
    <div class="ctext" style="color:#6d6d6d;white-space:pre;word-spacing:1px;top:4px;">L:   0-5%</div>
    <div class="dd"><u></u><svg class="tri" width="7" height="4" viewBox="0 0 7 4" shape-rendering="crispEdges"><path d="M0 0h7v1h-1v1h-1v1h-1v1h-1v-1h-1v-1h-1v-1h-1z"/></svg></div>
  </div>

  <div class="cb sunk" style="left:649px;top:423px;"><b></b></div>
  <div class="lab" style="left:666px;top:424px;letter-spacing:-0.15px;">Delta-E</div>
  <div class="sunk dis" style="left:667px;top:440px;width:92px;height:21px;"><b></b>
    <div class="ctext" style="color:#6d6d6d;top:4px;">0.0 - 0.5</div>
    <div class="dd"><u></u><svg class="tri" width="7" height="4" viewBox="0 0 7 4" shape-rendering="crispEdges"><path d="M0 0h7v1h-1v1h-1v1h-1v1h-1v-1h-1v-1h-1v-1h-1z"/></svg></div>
  </div>

  <div class="rad" style="left:668px;top:470px;"><b></b></div>
  <div class="lab dlab" style="left:685px;top:471px;">1976</div>
  <div class="rad" style="left:716px;top:470px;"><b></b><u></u></div>
  <div class="lab dlab" style="left:733px;top:471px;">2000</div>
  <div class="rad" style="left:668px;top:493px;"><b></b></div>
  <div class="lab dlab" style="left:685px;top:494px;">ITP</div>

  <div class="btn" style="left:649px;top:511px;width:114px;height:23px;border-color:#fff #696969 #696969 #fff;background:linear-gradient(#fbfbff,#e4e4ee 40%,#c6c6d8);"><b style="border-color:transparent #a0a0a0 #a0a0a0 transparent;"></b><span style="color:#60606c;letter-spacing:-0.2px;">Custom Filter</span></div>

  <div class="btn" style="left:637px;top:550px;width:134px;height:23px;"><b></b><span>Show Data</span></div>
  <div class="btn" style="left:637px;top:576px;width:134px;height:23px;"><b></b><span>Export to PDF</span></div>
</div>
</body>
</html>
